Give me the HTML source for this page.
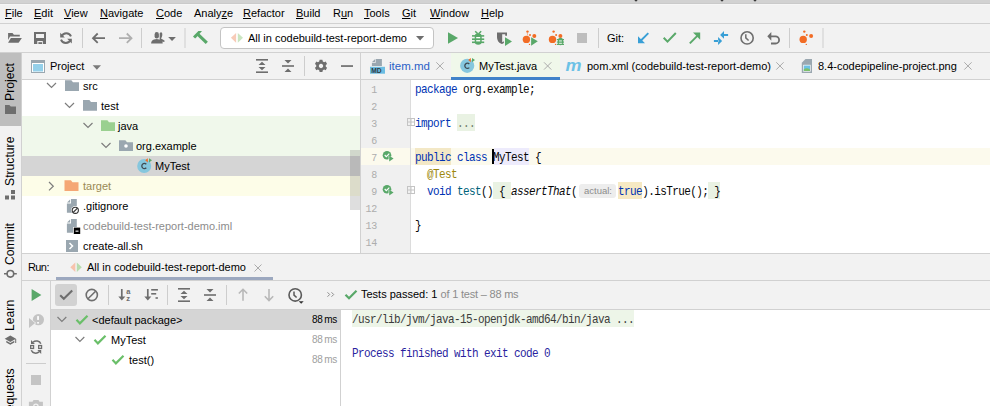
<!DOCTYPE html>
<html><head><meta charset="utf-8">
<style>
*{margin:0;padding:0;box-sizing:border-box}
html,body{width:990px;height:406px;overflow:hidden;background:#f2f2f2;font-family:"Liberation Sans",sans-serif;font-size:11px;color:#000}
.a{position:absolute}
.t{position:absolute;white-space:nowrap;line-height:20px;height:20px}
.m{font-family:"Liberation Mono",monospace;font-size:11px;letter-spacing:-0.6px}
.sy{transform:scaleY(1.1);transform-origin:0 11px}
.hl{position:absolute;background:#d1d1d1}
.vl{position:absolute;background:#d1d1d1;width:1px}
u{text-decoration:underline;text-decoration-thickness:1px;text-underline-offset:1px}
svg{position:absolute;overflow:visible}
.kw{color:#0033b3}
#code div,#lnum div{height:17px}
#code div{white-space:pre;transform:scaleY(1.1);transform-origin:0 11px}
</style></head><body>
<!-- top strip -->
<div class="a" style="left:0;top:0;width:990px;height:3px;background:#d2d2d2"></div>
<div class="a" style="left:0;top:3px;width:990px;height:1px;background:#cacaca"></div>
<div class="a" style="left:0;top:4px;width:990px;height:1px;background:#f6f6f6"></div>
<!-- menu bar -->
<div class="a" id="menu" style="left:0;top:5px;width:990px;height:18px;background:#f2f2f2"></div>
<div class="t" style="left:5px;top:3px"><u>F</u>ile</div>
<div class="t" style="left:34px;top:3px"><u>E</u>dit</div>
<div class="t" style="left:64px;top:3px"><u>V</u>iew</div>
<div class="t" style="left:100px;top:3px"><u>N</u>avigate</div>
<div class="t" style="left:156px;top:3px"><u>C</u>ode</div>
<div class="t" style="left:194px;top:3px">Analy<u>z</u>e</div>
<div class="t" style="left:243px;top:3px"><u>R</u>efactor</div>
<div class="t" style="left:296px;top:3px"><u>B</u>uild</div>
<div class="t" style="left:333px;top:3px">R<u>u</u>n</div>
<div class="t" style="left:364px;top:3px"><u>T</u>ools</div>
<div class="t" style="left:402px;top:3px"><u>G</u>it</div>
<div class="t" style="left:430px;top:3px"><u>W</u>indow</div>
<div class="t" style="left:481px;top:3px"><u>H</u>elp</div>

<div class="hl" style="left:0;top:23px;width:990px;height:1px"></div>
<!-- toolbar -->
<div class="a" style="left:220px;top:27px;width:214px;height:22px;background:#fff;border:1px solid #c4c4c4;border-radius:4px"></div>
<div class="t" style="left:248px;top:28px">All in codebuild-test-report-demo</div>
<div class="t" style="left:607px;top:28px">Git:</div>

<div class="hl" style="left:0;top:52px;width:990px;height:1px"></div>

<!-- left tool strip -->
<div class="a" style="left:0;top:53px;width:21px;height:353px;background:#f2f2f2"></div>
<div class="a" style="left:0;top:53px;width:21px;height:73px;background:#bebebe"></div>
<div class="vl" style="left:21px;top:53px;height:353px"></div>
<div class="t" style="left:0;top:100.5px;transform-origin:0 0;transform:rotate(-90deg);font-size:12.2px">Project</div>
<div class="t" style="left:0;top:186px;transform-origin:0 0;transform:rotate(-90deg);font-size:12.2px">Structure</div>
<div class="t" style="left:0;top:264.5px;transform-origin:0 0;transform:rotate(-90deg);font-size:12.2px">Commit</div>
<div class="t" style="left:0;top:331px;transform-origin:0 0;transform:rotate(-90deg);font-size:12.2px">Learn</div>
<div class="t" style="left:0;top:420px;transform-origin:0 0;transform:rotate(-90deg);font-size:12.2px">Requests</div>


<!-- project panel -->
<div class="a" style="left:22px;top:53px;width:338px;height:26px;background:#f2f2f2"></div>
<div class="hl" style="left:22px;top:79px;width:338px;height:1px"></div>
<div class="a" style="left:22px;top:80px;width:338px;height:173px;background:#fff;overflow:hidden" id="tree">
</div>
<div class="a" style="left:22px;top:116px;width:338px;height:40px;background:#f0f8eb"></div>
<div class="a" style="left:22px;top:156px;width:338px;height:20px;background:#d5d5d5"></div>
<div class="a" style="left:22px;top:176px;width:338px;height:20px;background:#fdfde8"></div>
<div class="t" style="left:50px;top:56px">Project</div>
<div class="a" style="left:350px;top:150px;width:10px;height:60px;background:rgba(0,0,0,0.13)"></div>
<div class="t" style="left:83px;top:76px">src</div>
<div class="t" style="left:101px;top:96px">test</div>
<div class="t" style="left:118px;top:116px">java</div>
<div class="t" style="left:136px;top:136px">org.example</div>
<div class="t" style="left:155px;top:156px">MyTest</div>
<div class="t" style="left:83px;top:176px;color:#9a8a55">target</div>
<div class="t" style="left:83px;top:196px">.gitignore</div>
<div class="t" style="left:83px;top:216px;color:#8c8c8c">codebuild-test-report-demo.iml</div>
<div class="t" style="left:83px;top:236px">create-all.sh</div>

<div class="vl" style="left:360px;top:53px;height:200px"></div>

<!-- editor -->
<div class="a" style="left:361px;top:53px;width:629px;height:26px;background:#f2f2f2"></div>
<div class="hl" style="left:361px;top:79px;width:629px;height:1px"></div>
<div class="a" style="left:361px;top:80px;width:629px;height:173px;background:#fff;overflow:hidden" id="ed">
</div>
<div class="a" style="left:451px;top:53px;width:109px;height:26px;background:#f0f8ea"></div>
<div class="a" style="left:451px;top:77px;width:109px;height:3px;background:#4083c9"></div>
<div class="t" style="left:389px;top:56px;color:#2b5fc7;font-size:11.5px">item.md</div>
<div class="t" style="left:479px;top:56px">MyTest.java</div>
<div class="t" style="left:587px;top:56px">pom.xml (codebuild-test-report-demo)</div>
<div class="t" style="left:818px;top:56px">8.4-codepipeline-project.png</div>
<div class="a" style="left:361px;top:80px;width:49px;height:173px;background:#f0f0f0"></div>
<div class="a" style="left:361px;top:148px;width:629px;height:17px;background:#fcfaed"></div>
<div class="vl" style="left:410px;top:80px;height:173px;background:#dcdcdc"></div>
<div class="a" style="left:415px;top:148px;width:36px;height:17px;background:#f3e8c6"></div>
<div class="a" style="left:494px;top:148px;width:35px;height:17px;background:#edebfc"></div>
<div class="a" style="left:457px;top:114px;width:18px;height:17px;background:#e9f2e3"></div>
<div class="a" style="left:493px;top:182px;width:18px;height:17px;background:#e9f2e3"></div>
<div class="a" style="left:708px;top:182px;width:12px;height:17px;background:#e9f2e3"></div>
<div class="a" style="left:618px;top:182px;width:24px;height:17px;background:#f6e9c3"></div>
<div class="a" style="left:579px;top:184px;width:37px;height:14px;background:#ededed;border-radius:3px"></div>
<div class="a" style="left:584px;top:182px;line-height:17px;font-size:9.5px;color:#8c8c8c;white-space:nowrap">actual:</div>
<div class="a" style="left:492px;top:149px;width:2px;height:15px;background:#000"></div>
<div id="code" class="a m" style="left:415px;top:82px;line-height:17px;color:#080808">
<div><span class="kw">package</span> org.example;</div>
<div> </div>
<div><span class="kw">import</span> <span style="color:#6e7a68">...</span></div>
<div> </div>
<div><span class="kw">public class</span> MyTest {</div>
<div>  <span style="color:#9e880d">@Test</span></div>
<div>  <span class="kw">void</span> <span style="color:#00627a">test</span>() { <i>assertThat</i>(<span style="display:inline-block;width:41px"></span><span class="kw">true</span>).isTrue(); }</div>
<div> </div>
<div>}</div>
</div>
<div id="lnum" class="a m" style="left:361px;top:82px;width:16px;line-height:17px;text-align:right;color:#adadad;font-size:10px;letter-spacing:-0.3px">
<div>1</div><div>2</div><div>3</div><div>6</div><div>7</div><div>8</div><div>9</div><div>12</div><div>13</div><div>14</div>
</div>


<!-- run window -->
<div class="hl" style="left:22px;top:253px;width:968px;height:1px"></div>
<div class="a" style="left:22px;top:254px;width:968px;height:26px;background:#f2f2f2"></div>
<div class="hl" style="left:22px;top:280px;width:968px;height:1px"></div>
<div class="a" style="left:22px;top:281px;width:28px;height:125px;background:#f2f2f2"></div>
<div class="vl" style="left:50px;top:281px;height:125px"></div>
<div class="a" style="left:51px;top:281px;width:939px;height:28px;background:#f2f2f2"></div>
<div class="hl" style="left:51px;top:309px;width:939px;height:1px"></div>
<div class="a" style="left:51px;top:310px;width:289px;height:96px;background:#fff"></div>
<div class="vl" style="left:340px;top:310px;height:96px"></div>
<div class="a" style="left:341px;top:310px;width:649px;height:96px;background:#fff"></div>
<div class="t" style="left:28px;top:257px;letter-spacing:-0.6px">Run:</div>
<div class="t" style="left:87px;top:257px">All in codebuild-test-report-demo</div>
<div class="a" style="left:56px;top:277px;width:217px;height:3px;background:#9ca8bf"></div>
<div class="a" style="left:55px;top:284px;width:22px;height:22px;background:#d2d2d2;border-radius:3px"></div>
<div class="t" style="left:361px;top:284px">Tests passed: 1 <span style="color:#8c8c8c;letter-spacing:-0.2px">of 1 test – 88 ms</span></div>
<div class="a" style="left:51px;top:310px;width:289px;height:20px;background:#d5d5d5"></div>
<div class="t" style="left:92px;top:310px">&lt;default package&gt;</div>
<div class="t" style="left:111px;top:330px">MyTest</div>
<div class="t" style="left:129px;top:350px">test()</div>
<div class="t" style="left:312px;top:310px;font-size:10px;letter-spacing:-0.25px;word-spacing:-1px">88 ms</div>
<div class="t" style="left:312px;top:330px;font-size:10px;letter-spacing:-0.25px;word-spacing:-1px;color:#a0a0a0">88 ms</div>
<div class="t" style="left:312px;top:350px;font-size:10px;letter-spacing:-0.25px;word-spacing:-1px;color:#a0a0a0">88 ms</div>
<div class="a" style="left:352px;top:310px;width:282px;height:17px;background:#edf5e8"></div>
<div class="a m sy" style="left:352px;top:312px;line-height:17px;white-space:pre;color:#3c3c3c">/usr/lib/jvm/java-15-openjdk-amd64/bin/java ...</div>
<div class="a m sy" style="left:352px;top:346px;line-height:17px;white-space:pre;color:#2a1fa0">Process finished with exit code 0</div>

<svg class="a" style="left:0;top:0" width="990" height="406" viewBox="0 0 990 406">
<g id="toolbar">
<!-- open folder -->
<path d="M8.1 33.1h4.4l1.4 1.6h5.9v1.7H10L8.1 40z" fill="#6e6e6e"/>
<path d="M10.9 38.1H21.9L18.6 42.8H8.1z" fill="#6e6e6e"/>
<!-- save -->
<path d="M34 32h12v12H34z M36 34v4h8v-4z M37.3 41v3h5.5v-3z" fill="#6e6e6e" fill-rule="evenodd"/>
<rect x="38.4" y="42.2" width="3.6" height="1.8" fill="#6e6e6e"/>
<!-- sync -->
<path d="M61.6 36.4A5.1 5.1 0 0 1 71 36.4" stroke="#6e6e6e" stroke-width="1.9" fill="none"/>
<path d="M70.6 39.6A5.1 5.1 0 0 1 61 39.6" stroke="#6e6e6e" stroke-width="1.9" fill="none"/>
<path d="M60.2 32.8v4.8h4.6z" fill="#6e6e6e"/>
<path d="M71.8 43.6v-4.8h-4.6z" fill="#6e6e6e"/>
<rect x="82" y="28" width="1" height="20" fill="#cdcdcd"/>
<!-- back -->
<path d="M92.5 38.2H105M97.7 33.5L93 38.2l4.7 4.7" stroke="#6e6e6e" stroke-width="1.8" fill="none"/>
<!-- forward -->
<path d="M119 38.2H131.5M126.8 33.5l4.7 4.7-4.7 4.7" stroke="#afafaf" stroke-width="1.8" fill="none"/>
<rect x="141" y="28" width="1" height="20" fill="#cdcdcd"/>
<!-- person -->
<path d="M159.7 33.2q1-1.3 2-.7q1 .8.5 3.2q-.3 1.6-.9 2.3l-.3.6 2.2 1.1q1.6.8 1.6 1.9l-1.8 .5-3.3-1.8z" fill="#6e6e6e"/>
<path d="M154.6 34.4q0-2.4 2.15-2.4t2.15 2.4v2.2q0 1.9-2.15 1.9t-2.15-1.9z" fill="#6e6e6e"/>
<path d="M151.1 43.6q0-3.2 3-4l2.6-.6 2.6.6q3.4.8 3.4 4z" fill="#6e6e6e"/>
<path d="M168.2 37h7.7l-3.85 4z" fill="#6e6e6e"/>
<rect x="184.5" y="28" width="1" height="20" fill="#cdcdcd"/>
<!-- hammer -->
<path d="M193 36.6L198.4 31.1H202L196 37.8L195.1 38.6Z" fill="#59a869"/>
<path d="M196.6 35.2l2.1-2.1 9.2 8.6-2.2 2.3z" fill="#59a869"/>
<!-- play -->
<path d="M448 32.2v11.6l10-5.8z" fill="#59a869"/>
<!-- bug -->
<g fill="#59a869">
<path d="M475.2 31.2l2.6 2.6M481.2 31.2l-2.6 2.6" stroke="#59a869" stroke-width="1.5"/>
<path d="M474.7 36.5q0-3.3 3.5-3.3t3.5 3.3v5q0 3.2-3.5 3.2t-3.5-3.2z"/>
<rect x="472" y="35.1" width="12.2" height="1.6"/>
<rect x="472" y="38.4" width="12.2" height="1.6"/>
<rect x="472" y="41.5" width="12.2" height="1.6"/>
<rect x="476.2" y="37" width="4" height="1.3" fill="#fff"/>
<rect x="476.2" y="40.1" width="4" height="1.3" fill="#fff"/>
</g>
<!-- coverage -->
<path d="M497 32.6H507V35.8H505.2V34.3H502.2V42.2L503.9 41.3V43.1Q502.6 44.2 501.3 43.8Q497 41.8 497 37.2Z" fill="#6e6e6e"/>
<path d="M505 37.2v8.8l7-4.4z" fill="#59a869"/>
<!-- profiler -->
<g fill="#f26c25">
<circle cx="526.4" cy="39.4" r="3.7"/><circle cx="527.5" cy="31.6" r="1.2"/><circle cx="530" cy="35.1" r="1"/><circle cx="534.3" cy="35.9" r="2"/><circle cx="529.5" cy="44.4" r=".7"/>
<path d="M527.2 32.6l.6 3" stroke="#f26c25" stroke-width=".5"/>
</g>
<path d="M531.1 37.2v8.6l6.7-4.5z" fill="#59a869"/>
<g fill="#f26c25" transform="translate(26.1 0)">
<circle cx="526.4" cy="39.4" r="3.7"/><circle cx="527.5" cy="31.6" r="1.2"/><circle cx="530" cy="35.1" r="1"/><circle cx="534.3" cy="35.9" r="2"/><circle cx="529.5" cy="44.4" r=".7"/>
</g>
<g fill="#59a869">
<path d="M558 40q0-2.2 2.5-2.2t2.5 2.2v3q0 2.2-2.5 2.2t-2.5-2.2z"/>
<rect x="556.9" y="39" width="7.1" height="1.3"/><rect x="556.9" y="41.4" width="7.1" height="1.3"/><rect x="556.9" y="43.7" width="7.1" height="1.3"/>
<rect x="559.1" y="40.5" width="2.8" height=".9" fill="#fff"/><rect x="559.1" y="42.8" width="2.8" height=".9" fill="#fff"/>
</g>
<!-- stop -->
<rect x="577" y="33" width="10" height="10" fill="#bdbdbd"/>
<rect x="598" y="28" width="1" height="20" fill="#cdcdcd"/>
<!-- git update arrow -->
<path d="M648.3 33.2l-7.8 7.8" stroke="#389fd6" stroke-width="1.9"/>
<path d="M638 36.3v7h7z" fill="#389fd6"/>
<!-- check -->
<path d="M663.7 37.8l3.8 3.8 8.3-8.6" stroke="#59a869" stroke-width="2" fill="none"/>
<!-- push -->
<path d="M689.8 43.3l8-8" stroke="#59a869" stroke-width="1.9"/>
<path d="M700.2 32.5h-7.2l7.2 7.2z" fill="#59a869"/>
<!-- merge -->
<path d="M720.1 34.9L724 31v7.8z M723.5 34.1h4.6v1.8h-4.6z" fill="#389fd6"/>
<path d="M722.1 41L718.1 37v8z M713.9 40.1h4.6v1.8h-4.6z" fill="#389fd6"/>
<!-- clock -->
<circle cx="747.1" cy="37.9" r="6.1" stroke="#6e6e6e" stroke-width="1.6" fill="none"/>
<path d="M745.8 34.3v3.6l2.8 2.6" stroke="#6e6e6e" stroke-width="1.5" fill="none"/>
<!-- undo -->
<path d="M769.5 36.3h6a3.6 3.6 0 0 1 0 7.2h-4.5" stroke="#6e6e6e" stroke-width="1.8" fill="none"/>
<path d="M767.3 36.3l4-4.4v8.8z" fill="#6e6e6e"/>
<rect x="789" y="28" width="1" height="20" fill="#cdcdcd"/>
<g fill="#f26c25">
<circle cx="803.2" cy="39.4" r="3.7"/><circle cx="804.3" cy="31.6" r="1.2"/><circle cx="806.8" cy="35.1" r="1"/><circle cx="811.1" cy="35.9" r="2"/><circle cx="806.3" cy="44.4" r=".7"/>
</g>
<rect x="822.5" y="28" width="1" height="20" fill="#cdcdcd"/>
</g>
<g id="combo">
<path d="M236.1 32.9v9.9l-5.2-4.95z" fill="#f7cbb8"/>
<path d="M237.8 32.9v9.9l5.2-4.95z" fill="#c9e5c1"/>
<path d="M416 36h8.2l-4.1 4.5z" fill="#6e6e6e"/>
</g>
<g id="proj">
<rect x="31.5" y="60.5" width="13" height="12" fill="#fff" stroke="#9aa7b0"/>
<rect x="32" y="61" width="12" height="2" fill="#9aa7b0"/>
<rect x="33" y="64" width="10" height="7.5" fill="#94d0ea"/>
<path d="M92.7 65.2h8.3l-4.15 4.5z" fill="#7a7a7a"/>
<!-- expand all -->
<rect x="256" y="59" width="12" height="1.6" fill="#6e6e6e"/>
<rect x="256" y="71.4" width="12" height="1.6" fill="#6e6e6e"/>
<path d="M258.5 65h7l-3.5-3.2z M258.5 67h7l-3.5 3.2z" fill="#6e6e6e"/>
<!-- collapse all -->
<rect x="282" y="65.2" width="12" height="1.6" fill="#6e6e6e"/>
<path d="M284.5 60h7l-3.5 3.6z M284.5 72h7l-3.5-3.6z" fill="#6e6e6e"/>
<rect x="304" y="56" width="1" height="20" fill="#cdcdcd"/>
<!-- gear -->
<g transform="translate(321 66)" fill="#6e6e6e">
<path d="M-1.4 -6.2h2.8l.4 1.7 1.3.7 1.6-.6 1.4 2.4-1.3 1.1v1.6l1.3 1.1-1.4 2.4-1.6-.6-1.3.7-.4 1.7h-2.8l-.4-1.7-1.3-.7-1.6.6-1.4-2.4 1.3-1.1v-1.6l-1.3-1.1 1.4-2.4 1.6.6 1.3-.7z M0 -2.2a2.2 2.2 0 1 0 .01 0z" fill-rule="evenodd"/>
</g>
<rect x="341" y="65.2" width="12" height="1.7" fill="#6e6e6e"/>
</g>
<g id="treeicons">
<defs>
<path id="fold" d="M0 0h6.4l1.6 2H14v8.7H0z"/>
<path id="chd" d="M0 0l4.5 4.5L9 0" fill="none" stroke="#7d7d7d" stroke-width="1.2"/>
</defs>
<use href="#chd" x="47" y="83"/>
<use href="#fold" x="65" y="80.2" fill="#9aa7b0"/>
<use href="#chd" x="65" y="103"/>
<use href="#fold" x="83" y="100.1" fill="#9aa7b0"/>
<use href="#chd" x="83.5" y="123"/>
<use href="#fold" x="101" y="120.3" fill="#9ad090"/>
<use href="#chd" x="101.5" y="143"/>
<use href="#fold" x="119" y="140.2" fill="#9aa7b0"/>
<circle cx="126" cy="146" r="1.8" fill="#fff"/>
<!-- class icon -->
<circle cx="144.2" cy="166" r="7" fill="#86c7de"/>
<path d="M146.3 164.2a2.6 2.6 0 1 0 0 3.6" stroke="#3e4b53" stroke-width="1.3" fill="none"/>
<path d="M147.8 158.2v4.2l-2.6-2.1z" fill="#f26c25"/>
<path d="M149 158.2v4.2l3-2.1z" fill="#59a869"/>
<!-- target -->
<path d="M49 182l4.3 4.2L49 190.4" fill="none" stroke="#7d7d7d" stroke-width="1.2"/>
<use href="#fold" x="64.5" y="180.2" fill="#f5a775"/>
<!-- gitignore -->
<path d="M71 199h5.8v13.8h-9.9v-9.3h4.1z" fill="#9aa7b0"/>
<path d="M67 202.6l3.1-3.1v3.1z" fill="#9aa7b0"/>
<circle cx="75.3" cy="210.3" r="4.2" fill="#fff"/>
<circle cx="75.3" cy="210.3" r="3.1" fill="none" stroke="#333" stroke-width="1.1"/>
<path d="M73.1 212.5l4.4-4.4" stroke="#333" stroke-width="1.1"/>
<!-- iml -->
<path d="M71 219h5.8v13.8h-9.9v-9.3h4.1z" fill="#9aa7b0"/>
<path d="M67 222.6l3.1-3.1v3.1z" fill="#9aa7b0"/>
<rect x="73" y="227" width="8" height="8" fill="#fff"/>
<rect x="73.8" y="227.6" width="6.4" height="6.4" fill="#000"/>
<rect x="75.5" y="230.6" width="3" height="1.1" fill="#fff"/>
<!-- sh -->
<rect x="66" y="240" width="12" height="12" fill="#9aa7b0"/>
<path d="M69.5 243l3 3-3 3" stroke="#fff" stroke-width="1.5" fill="none"/>
</g>
<g id="tabicons">
<!-- md -->
<path d="M375.8 59h6.1v7h-10v-3.2h3.9z" fill="#9aa7b0"/>
<path d="M372 62l3.2-3.1v3.1z" fill="#9aa7b0"/>
<rect x="370" y="66.8" width="15" height="6.9" fill="#6cbde2"/>
<text x="371.3" y="72.9" font-family="Liberation Sans" font-weight="bold" font-size="6.6" fill="#2f3b44">MD</text>
<path d="M436.3 62.3l7.3 7.3M443.6 62.3l-7.3 7.3" stroke="#ababab" stroke-width="1"/>
<!-- class -->
<circle cx="467.2" cy="65.8" r="7.1" fill="#86c7de"/>
<path d="M469.3 64a2.6 2.6 0 1 0 0 3.6" stroke="#3e4b53" stroke-width="1.3" fill="none"/>
<path d="M470.8 58v4.2l-2.6-2.1z" fill="#f26c25"/>
<path d="M472 58v4.2l3-2.1z" fill="#59a869"/>
<path d="M544 62.3l7.3 7.3M551.3 62.3l-7.3 7.3" stroke="#ababab" stroke-width="1"/>
<!-- m -->
<text x="565.5" y="70.8" font-family="Liberation Sans" font-weight="bold" font-style="italic" font-size="18" fill="#6cc1e6" transform="translate(565.5 0) scale(1 0.95) translate(-565.5 3.5)">m</text>
<path d="M776.3 62.3l7.3 7.3M783.6 62.3l-7.3 7.3" stroke="#ababab" stroke-width="1"/>
<!-- png -->
<path d="M805.5 59h6.5v14h-10.2v-10.3z" fill="#9aa7b0"/>
<rect x="803.2" y="64.8" width="7.4" height="6.8" fill="#fff"/>
<rect x="803.8" y="65.5" width="6.2" height="5.4" fill="#6cc1e6"/>
<path d="M803.8 69.2q3-2.2 6.2 .4v1.3h-6.2z" fill="#7cc06b"/>
<path d="M964.3 62.3l7.3 7.3M971.6 62.3l-7.3 7.3" stroke="#ababab" stroke-width="1"/>
</g>
<g id="gutter">
<defs>
<g id="runic">
<circle cx="0" cy="0" r="4.3" fill="#59a869"/>
<path d="M-2.3 -0.2l1.6 1.6 3-3" stroke="#fff" stroke-width="1.1" fill="none"/>
<path d="M1.6 0.2v6.4l5.1-3.2z" fill="#fff"/>
<path d="M2.2 0.6v5.6l4.4-2.8z" fill="#59a869"/>
</g>
</defs>
<use href="#runic" x="387" y="155.2"/>
<use href="#runic" x="387" y="189.2"/>
<g fill="none" stroke="#c4c4c4" stroke-width="1">
<rect x="407.5" y="118.5" width="7" height="7"/><path d="M411 119v6M408 122h6"/>
<rect x="407.5" y="186.5" width="7" height="7"/><path d="M411 187v6M408 190h6"/>
</g>
</g>
<g id="runicons">
<path d="M75.3 262.6v9.4l-5-4.7z" fill="#f7c3ad"/>
<path d="M76.8 262.6v9.4l5-4.7z" fill="#b7dcaf"/>
<path d="M254.5 264.5l7 7M261.5 264.5l-7 7" stroke="#ababab" stroke-width="1"/>
<!-- left vertical -->
<path d="M31.6 288.9v12.2l9.8-6.1z" fill="#59a869"/>
<circle cx="38.4" cy="319.7" r="5.6" fill="#c4c4c4"/>
<path d="M29 318v9.9l6.1-4.95z" fill="#c4c4c4" stroke="#f2f2f2" stroke-width="1.3" stroke-linejoin="miter"/>
<path d="M29 318v9.9l6.1-4.95z" fill="#c4c4c4"/>
<rect x="37.2" y="316.1" width="1.7" height="3.8" fill="#fff"/>
<rect x="37.2" y="322" width="1.7" height="1.6" fill="#fff"/>
<g stroke="#6e6e6e" stroke-width="1.5" fill="none">
<path d="M33 342.2A4.7 4.2 0 0 1 40.8 343.8"/><path d="M31.3 350.3A4.7 4.2 0 0 0 39.1 351.9"/>
<rect x="30.65" y="345.55" width="2.9" height="2.9" stroke-width="1.3"/><rect x="38.65" y="345.55" width="2.9" height="2.9" stroke-width="1.3"/>
</g>
<path d="M31 340V343.9H34.9z M41.2 354V350.1H37.3z" fill="#6e6e6e"/>
<rect x="26" y="363" width="20" height="1" fill="#cdcdcd"/>
<rect x="31" y="375" width="10" height="10" fill="#c4c4c4"/>
<path d="M28.9 401.8h3.6l1-1.8h5l1 1.8h3.4V410H28.9z" fill="#c4c4c4"/><circle cx="35.9" cy="406.4" r="2.2" fill="none" stroke="#f2f2f2" stroke-width="1.2"/>
<!-- top toolbar -->
<path d="M60.2 295.2l3.6 3.6 8.4-8.4" stroke="#6e6e6e" stroke-width="2.1" fill="none"/>
<circle cx="91.8" cy="295" r="5.6" stroke="#6e6e6e" stroke-width="1.6" fill="none"/>
<path d="M88 298.8l7.6-7.6" stroke="#6e6e6e" stroke-width="1.6"/>
<rect x="108" y="285" width="1" height="20" fill="#cdcdcd"/>
<path d="M121.8 289v10" stroke="#6e6e6e" stroke-width="1.7"/>
<path d="M118.3 296.5l3.5 4 3.5-4z" fill="#6e6e6e"/>
<text x="126.3" y="294" font-family="Liberation Sans" font-weight="bold" font-size="7.5" fill="#6e6e6e">a</text>
<text x="126.3" y="300.6" font-family="Liberation Sans" font-weight="bold" font-size="7.5" fill="#6e6e6e">z</text>
<path d="M147.8 289v10" stroke="#6e6e6e" stroke-width="1.7"/>
<path d="M144.3 296.5l3.5 4 3.5-4z" fill="#6e6e6e"/>
<rect x="151.2" y="289" width="6.7" height="1.6" fill="#6e6e6e"/>
<rect x="151.2" y="293" width="5" height="1.6" fill="#6e6e6e"/>
<rect x="155.5" y="297.2" width="2.4" height="1.6" fill="#6e6e6e"/>
<rect x="167" y="285" width="1" height="20" fill="#cdcdcd"/>
<rect x="178" y="288" width="12" height="1.6" fill="#6e6e6e"/>
<rect x="178" y="300.4" width="12" height="1.6" fill="#6e6e6e"/>
<path d="M180.5 294h7l-3.5-3.2z M180.5 296h7l-3.5 3.2z" fill="#6e6e6e"/>
<rect x="204" y="294.2" width="12" height="1.6" fill="#6e6e6e"/>
<path d="M206.5 289h7l-3.5 3.6z M206.5 301h7l-3.5-3.6z" fill="#6e6e6e"/>
<rect x="226" y="285" width="1" height="20" fill="#cdcdcd"/>
<path d="M243 289.5v11.3M238.8 293.5l4.2-4.2 4.2 4.2" stroke="#b8b8b8" stroke-width="1.6" fill="none"/>
<path d="M269 289v11.3M264.8 296.3l4.2 4.2 4.2-4.2" stroke="#b8b8b8" stroke-width="1.6" fill="none"/>
<circle cx="295.2" cy="294.9" r="6.2" stroke="#5a5a5a" stroke-width="1.6" fill="none"/>
<path d="M294 291.5v3.6l2.6 2.4" stroke="#5a5a5a" stroke-width="1.5" fill="none"/>
<path d="M298.7 301.2h5l-2.5 2.5z" fill="#333"/>
<path d="M327.5 292.3l2.2 2.2-2.2 2.2M331.5 292.3l2.2 2.2-2.2 2.2" stroke="#8c8c8c" stroke-width="1" fill="none"/>
<path d="M345.5 294.8l3.5 3.5 7.5-7.6" stroke="#59a869" stroke-width="2.2" fill="none"/>
<!-- tests tree -->
<path d="M57.5 317l4.4 4.4 4.4-4.4" fill="none" stroke="#7d7d7d" stroke-width="1.2"/>
<path d="M76.5 319.8l3.4 3.6 7.6-7.6" stroke="#6abf69" stroke-width="2.2" fill="none"/>
<path d="M75.5 337l4.4 4.4 4.4-4.4" fill="none" stroke="#7d7d7d" stroke-width="1.2"/>
<path d="M94.5 339.8l3.4 3.6 7.6-7.6" stroke="#6abf69" stroke-width="2.2" fill="none"/>
<path d="M112.5 359.8l3.4 3.6 7.6-7.6" stroke="#6abf69" stroke-width="2.2" fill="none"/>
</g>
<g id="stripicons">
<path d="M5 105h4.3l1.5 1.6H16v7.4H5z" fill="#6e6e6e"/>
<rect x="5" y="195.5" width="4" height="4" fill="#6e6e6e"/>
<rect x="11" y="195.5" width="4" height="4" fill="#6e6e6e"/>
<rect x="11" y="190" width="4" height="4" fill="#6e6e6e"/>
<circle cx="10.4" cy="273.8" r="3.3" stroke="#6e6e6e" stroke-width="1.6" fill="none"/>
<path d="M4 273.8h3.2M13.6 273.8h3.2" stroke="#6e6e6e" stroke-width="1.6"/>
<path d="M4.7 338.8l5.6-3.3 5.7 3.3-5.7 3.3z" fill="#6e6e6e"/>
<path d="M6.3 340.7v1.7l4 2.4 4-2.4v-1.7l-4 2.3z" fill="#6e6e6e"/>
<rect x="15.2" y="339" width="1" height="4" fill="#6e6e6e"/>
</g>
<g id="titledots" fill="#3a3a3a"><ellipse cx="636" cy="0.3" rx="1.4" ry="1.1"/><ellipse cx="722" cy="0.3" rx="1.4" ry="1.1"/><ellipse cx="755" cy="0.3" rx="1.4" ry="1.1"/></g>
<g id="icons2"></g>
</svg>
</body></html>
